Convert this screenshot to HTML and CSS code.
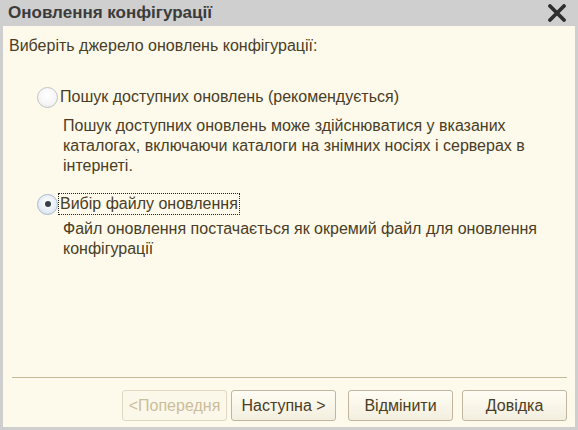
FILE: index.html
```html
<!DOCTYPE html>
<html lang="uk">
<head>
<meta charset="utf-8">
<title>Оновлення конфігурації</title>
<link rel="stylesheet" href="styles.css">
</head>
<body>
<div class="window">
  <div class="titlebar">
    <span class="title">Оновлення конфігурації</span>
    <svg class="close" width="20" height="18" viewBox="0 0 20 18">
      <path d="M3 2 L17 16 M17 2 L3 16" stroke="#2e2e2e" stroke-width="3.8" stroke-linecap="round"/>
    </svg>
  </div>
  <div class="content">
    <div class="intro">Виберіть джерело оновлень конфігурації:</div>
    <div class="option first">
      <div class="choice">
        <span class="radio"></span>
        <span class="label">Пошук доступних оновлень (рекомендується)</span>
      </div>
      <div class="desc">Пошук доступних оновлень може здійснюватися у вказаних<br>каталогах, включаючи каталоги на знімних носіях і серверах в<br>інтернеті.</div>
    </div>
    <div class="option second">
      <div class="choice">
        <span class="radio checked"></span>
        <span class="label focused">Вибір файлу оновлення</span>
      </div>
      <div class="desc">Файл оновлення постачається як окремий файл для оновлення<br>конфігурації</div>
    </div>
  </div>
  <div class="footer">
    <div class="separator"></div>
    <div class="buttons">
      <button class="btn disabled">&lt;Попередня</button>
      <button class="btn">Наступна &gt;</button>
      <button class="btn wide-gap">Відмінити</button>
      <button class="btn">Довідка</button>
    </div>
  </div>
</div>
</body>
</html>
```
FILE: styles.css
```css
* { box-sizing: border-box; }

html, body {
  margin: 0;
  padding: 0;
}

body {
  width: 578px;
  height: 430px;
  overflow: hidden;
  font-family: "Liberation Sans", Arial, sans-serif;
  font-size: 16px;
  color: #4a3d26;
  background: #cfcfcf;
}

.window {
  width: 578px;
  height: 430px;
  display: flex;
  flex-direction: column;
  background: #cfcfcf;
  padding: 0 3px 3px 3px;
}

.titlebar {
  height: 26px;
  flex: none;
  display: flex;
  align-items: center;
  justify-content: space-between;
  padding: 0 8px 1px 5px;
}

.title {
  font-weight: bold;
  font-size: 17px;
  color: #3b3b3b;
}

.close {
  display: block;
  margin-top: 1px;
}

.content {
  flex: 1;
  background: #fdfaeb;
  padding: 10px 6px 0 6px;
  line-height: 20px;
}

.intro {
  height: 20px;
}

.option {
  margin-left: 28px;
}

.option.first { margin-top: 30px; }
.option.second { margin-top: 17px; }

.choice {
  display: flex;
  align-items: center;
  height: 22px;
}

.radio {
  width: 21px;
  height: 21px;
  border-radius: 50%;
  flex: none;
  border: 1px solid #c2c2c2;
  background: radial-gradient(circle at 50% 40%, #ffffff 0%, #f6f6f6 55%, #e4e4e4 100%);
  position: relative;
}

.radio.checked {
  border-color: #a9bad0;
  background: radial-gradient(circle at 50% 40%, #ffffff 0%, #e8eef6 55%, #cbd7e6 100%);
}

.radio.checked::after {
  content: "";
  position: absolute;
  left: 6.5px;
  top: 6.5px;
  width: 6px;
  height: 6px;
  border-radius: 50%;
  background: #3a3f47;
}

.label {
  line-height: 20px;
  padding: 0 1px;
  border: 1px dotted transparent;
}

.label.focused {
  border-color: #222;
}

.desc {
  margin-left: 26px;
  margin-top: 8px;
}

.option.second .desc { margin-top: 4px; }

.footer {
  flex: none;
  background: #fdfaeb;
  padding: 0 8px 0 9px;
  height: 50px;
}

.separator {
  height: 1px;
  background: #c6b996;
}

.buttons {
  display: flex;
  justify-content: flex-end;
  gap: 4px;
  margin-top: 12px;
}

.btn {
  width: 105px;
  height: 31px;
  font-family: "Liberation Sans", Arial, sans-serif;
  font-size: 16px;
  color: #4a3d26;
  background: linear-gradient(#fffdf4, #f3efdf);
  border: 1px solid #bfb69d;
  border-radius: 3px;
  padding: 0;
}

.btn.disabled {
  color: #cbbd9b;
  border-color: #e0d8c2;
  background: #fbf8ea;
}

.btn.wide-gap {
  margin-left: 8px;
  margin-right: 5px;
}
```
